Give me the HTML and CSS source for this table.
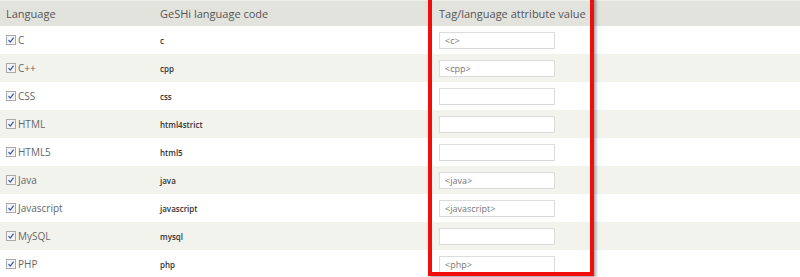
FILE: index.html
```html
<!DOCTYPE html>
<html lang="en">
<head>
    <meta charset="UTF-8">
    <title>GeSHi languages</title>
    <link rel="stylesheet" href="styles.css">
</head>
<body>
    <div class="wrap">
        <table class="langs">
            <thead>
                <tr>
                    <th class="col-lang">Language</th>
                    <th class="col-code">GeSHi language code</th>
                    <th class="col-tag">Tag/language attribute value</th>
                </tr>
            </thead>
            <tbody>
                <tr><td><span class="check"><svg width="10" height="10" viewBox="0 0 10 10"><rect x="0.5" y="0.5" width="9" height="9" fill="#f4f4f4" stroke="#a9a9a9"/><path d="M2.5 5.2 L4.3 7 L7.6 2.6" fill="none" stroke="#3a55b4" stroke-width="1.2"/></svg></span>C</td><td class="code">c</td><td><div class="field">&lt;c&gt;</div></td></tr>
                <tr><td><span class="check"><svg width="10" height="10" viewBox="0 0 10 10"><rect x="0.5" y="0.5" width="9" height="9" fill="#f4f4f4" stroke="#a9a9a9"/><path d="M2.5 5.2 L4.3 7 L7.6 2.6" fill="none" stroke="#3a55b4" stroke-width="1.2"/></svg></span>C++</td><td class="code">cpp</td><td><div class="field">&lt;cpp&gt;</div></td></tr>
                <tr><td><span class="check"><svg width="10" height="10" viewBox="0 0 10 10"><rect x="0.5" y="0.5" width="9" height="9" fill="#f4f4f4" stroke="#a9a9a9"/><path d="M2.5 5.2 L4.3 7 L7.6 2.6" fill="none" stroke="#3a55b4" stroke-width="1.2"/></svg></span>CSS</td><td class="code">css</td><td><div class="field"></div></td></tr>
                <tr><td><span class="check"><svg width="10" height="10" viewBox="0 0 10 10"><rect x="0.5" y="0.5" width="9" height="9" fill="#f4f4f4" stroke="#a9a9a9"/><path d="M2.5 5.2 L4.3 7 L7.6 2.6" fill="none" stroke="#3a55b4" stroke-width="1.2"/></svg></span>HTML</td><td class="code">html4strict</td><td><div class="field"></div></td></tr>
                <tr><td><span class="check"><svg width="10" height="10" viewBox="0 0 10 10"><rect x="0.5" y="0.5" width="9" height="9" fill="#f4f4f4" stroke="#a9a9a9"/><path d="M2.5 5.2 L4.3 7 L7.6 2.6" fill="none" stroke="#3a55b4" stroke-width="1.2"/></svg></span>HTML5</td><td class="code">html5</td><td><div class="field"></div></td></tr>
                <tr><td><span class="check"><svg width="10" height="10" viewBox="0 0 10 10"><rect x="0.5" y="0.5" width="9" height="9" fill="#f4f4f4" stroke="#a9a9a9"/><path d="M2.5 5.2 L4.3 7 L7.6 2.6" fill="none" stroke="#3a55b4" stroke-width="1.2"/></svg></span>Java</td><td class="code">java</td><td><div class="field">&lt;java&gt;</div></td></tr>
                <tr><td><span class="check"><svg width="10" height="10" viewBox="0 0 10 10"><rect x="0.5" y="0.5" width="9" height="9" fill="#f4f4f4" stroke="#a9a9a9"/><path d="M2.5 5.2 L4.3 7 L7.6 2.6" fill="none" stroke="#3a55b4" stroke-width="1.2"/></svg></span>Javascript</td><td class="code">javascript</td><td><div class="field">&lt;javascript&gt;</div></td></tr>
                <tr><td><span class="check"><svg width="10" height="10" viewBox="0 0 10 10"><rect x="0.5" y="0.5" width="9" height="9" fill="#f4f4f4" stroke="#a9a9a9"/><path d="M2.5 5.2 L4.3 7 L7.6 2.6" fill="none" stroke="#3a55b4" stroke-width="1.2"/></svg></span>MySQL</td><td class="code">mysql</td><td><div class="field"></div></td></tr>
                <tr><td><span class="check"><svg width="10" height="10" viewBox="0 0 10 10"><rect x="0.5" y="0.5" width="9" height="9" fill="#f4f4f4" stroke="#a9a9a9"/><path d="M2.5 5.2 L4.3 7 L7.6 2.6" fill="none" stroke="#3a55b4" stroke-width="1.2"/></svg></span>PHP</td><td class="code">php</td><td><div class="field">&lt;php&gt;</div></td></tr>
            </tbody>
        </table>
        <div class="highlight"></div>
    </div>
</body>
</html>
```

FILE: styles.css
```css
body {
    margin: 0;
    background: #fff;
    font-family: "Open Sans", sans-serif;
}
.wrap {
    position: relative;
    width: 800px;
    height: 277px;
    overflow: hidden;
}
.langs {
    width: 800px;
    border-collapse: collapse;
}
.langs th {
    height: 25px;
    padding: 0 0 0 6px;
    background: #e3e3de;
    color: #555;
    font-size: 11px;
    font-weight: normal;
    text-align: left;
    border-top: 1px solid #ededea;
}
.langs td {
    height: 28px;
    padding: 0 0 0 6px;
    color: #666;
    font-size: 10px;
}
.langs tbody tr:nth-child(even) td {
    background: #f3f3ee;
}
.col-lang {
    width: 148px;
}
.col-code {
    width: 268px;
}
.col-tag {
    padding-left: 11px !important;
}
.langs td:last-child {
    padding-left: 11px;
}
.check {
    display: inline-block;
    vertical-align: -1px;
    margin-right: 2px;
}
.check svg {
    display: block;
}
.code {
    font-size: 8px !important;
    font-weight: 600;
    color: #333 !important;
}
.field {
    width: 109px;
    height: 15px;
    border: 1px solid #dcdcdc;
    background: #fff;
    padding-left: 5px;
    font-size: 9px;
    line-height: 15px;
    color: #777;
}
.highlight {
    position: absolute;
    left: 428px;
    top: -4px;
    width: 158px;
    height: 272px;
    border: 4px solid #f20d0d;
    box-shadow: 2px 2px 3px rgba(0, 0, 0, 0.35);
}
```
